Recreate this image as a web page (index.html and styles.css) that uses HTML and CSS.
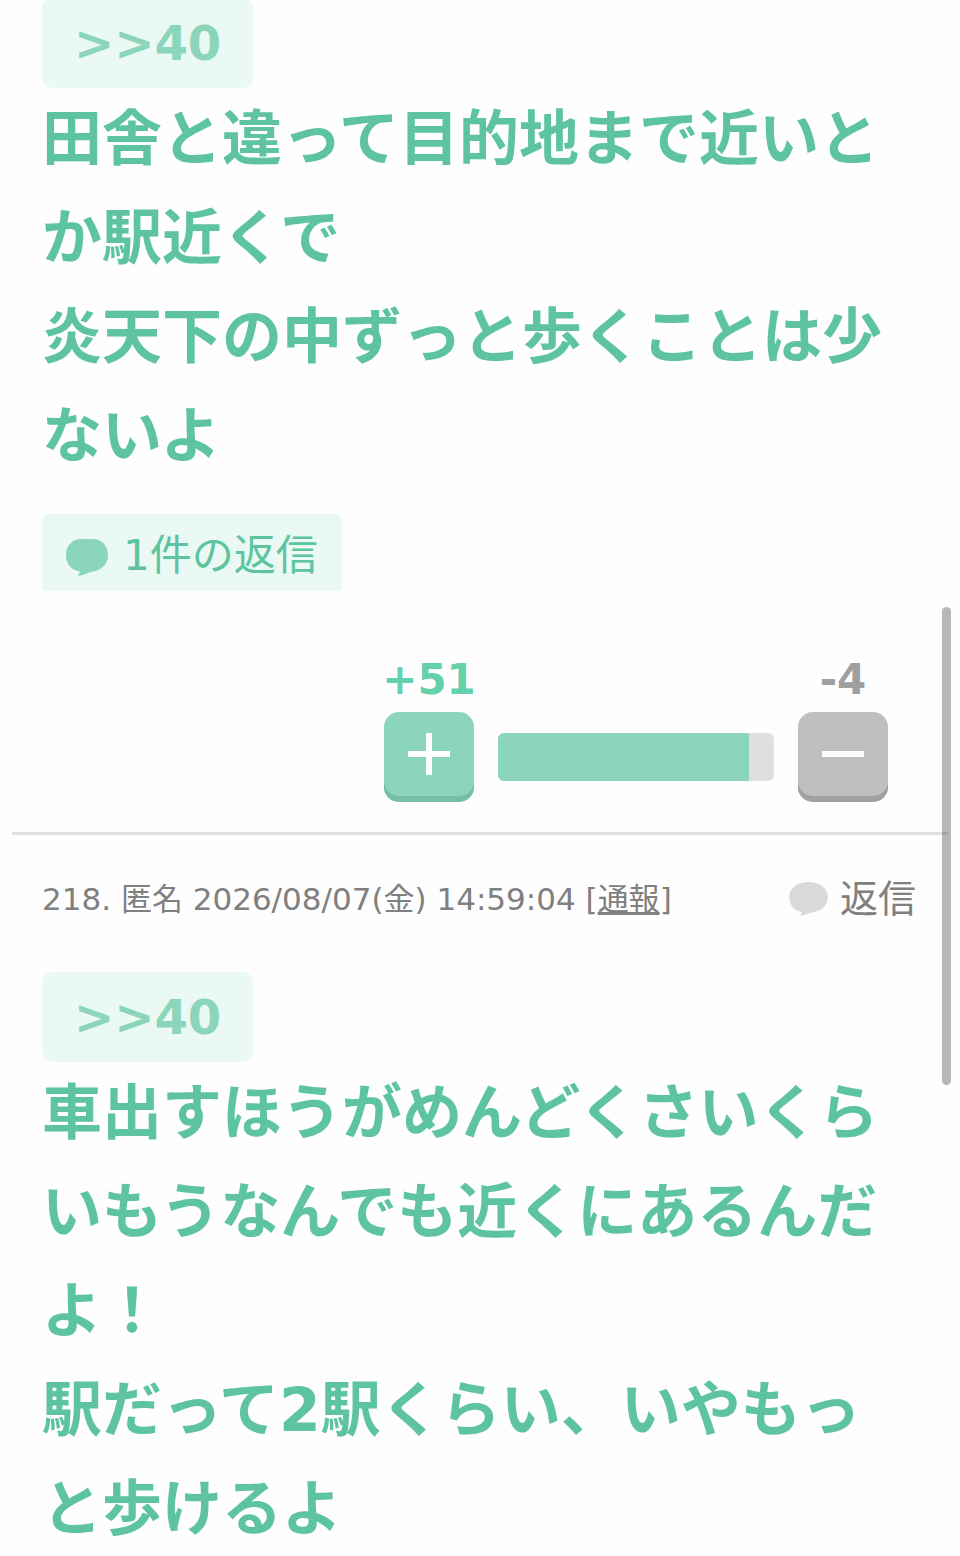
FILE: index.html
```html
<!DOCTYPE html>
<html lang="ja">
<head>
  <meta charset="UTF-8" />
  <meta name="viewport" content="width=device-width, initial-scale=1" />
  <title>トピック</title>
  <link rel="stylesheet" href="styles.css">
</head>
<body>
  <main class="comments">
    <article class="comment">
      <div class="comment-body">
        <a class="anchor" href="#comment40">&gt;&gt;40</a>
        <p class="comment-text">田舎と違って目的地まで近いとか駅近くで<br>炎天下の中ずっと歩くことは少ないよ</p>
        <a class="replies" href="#replies">
          <svg class="bubble" viewBox="0 0 42 37" aria-hidden="true">
            <path d="M15 0H27C36 0 42 7 42 16C42 25 36 31 27 32.500C22 33.500 19 36 12 37L14 32.500C5 31 0 25 0 16C0 7 6 0 15 0Z" />
          </svg>
          <span>1件の返信</span>
        </a>
      </div>
      <div class="votes">
        <div class="vote">
          <span class="count plus">+51</span>
          <button class="vote-btn plus-btn" type="button" aria-label="プラス">
            <svg viewBox="0 0 42 42" aria-hidden="true"><path d="M0 21H42M21 0V42" /></svg>
          </button>
        </div>
        <div class="bar"><div class="bar-fill" style="width: 91%"></div></div>
        <div class="vote">
          <span class="count minus">-4</span>
          <button class="vote-btn minus-btn" type="button" aria-label="マイナス">
            <svg viewBox="0 0 42 42" aria-hidden="true"><path d="M0 21H42" /></svg>
          </button>
        </div>
      </div>
    </article>

    <article class="comment">
      <header class="comment-info">
        <p class="meta">218. 匿名 2026/08/07(金) 14:59:04 [<a href="#report">通報</a>]</p>
        <a class="reply" href="#reply">
          <svg class="bubble" viewBox="0 0 42 37" aria-hidden="true">
            <path d="M21 0C34 0 42 7 42 16C42 25 36 31 27 32.500C22 33.500 19 36 12 37L14 32.500C5 31 0 25 0 16C0 7 8 0 21 0Z" />
          </svg>
          <span>返信</span>
        </a>
      </header>
      <div class="comment-body">
        <a class="anchor" href="#comment40">&gt;&gt;40</a>
        <p class="comment-text">車出すほうがめんどくさいくらいもうなんでも近くにあるんだよ！<br>駅だって2駅くらい、いやもっと歩けるよ</p>
      </div>
    </article>
  </main>
  <div class="scroll-thumb"></div>
</body>
</html>
```
FILE: styles.css
```css
:root {
  --green: #5ec4a0;
  --green-light: #8bd5bb;
  --mint: #eaf9f4;
  --gray: #808080;
}
* {
  box-sizing: border-box;
}
html {
  scrollbar-width: none;
}
body {
  margin: 0;
  overflow-x: hidden;
  background: #fefefe;
  color: var(--gray);
  font-family: Verdana, 'DejaVu Sans', 'Noto Sans CJK JP', sans-serif;
}
p {
  margin: 0;
}
a {
  color: inherit;
  text-decoration: none;
}
.comments {
  margin: -2px 12px 0;
}
.comment + .comment {
  border-top: 3px solid #e0e0e0;
}
.comment-body {
  padding: 0 60px 0 30px;
}
.anchor {
  display: block;
  width: fit-content;
  padding: 0 32px;
  border-radius: 10px;
  background: var(--mint);
  color: var(--green-light);
  font-size: 48px;
  font-weight: 700;
  line-height: 90px;
}
.comment-text {
  padding-top: 2px;
  color: var(--green);
  font-size: 60px;
  font-weight: 700;
  line-height: 99px;
}
.replies {
  display: flex;
  align-items: center;
  gap: 15px;
  width: fit-content;
  margin-top: 28px;
  padding: 6px 24px 0;
  border-radius: 6px 6px 0 0;
  background: var(--mint);
  color: var(--green);
  font-size: 42px;
  line-height: 71px;
}
.bubble {
  flex: none;
  width: 42px;
  height: 37px;
  fill: var(--green-light);
}
.replies .bubble {
  margin-top: 4px;
}
.votes {
  display: flex;
  justify-content: flex-end;
  align-items: flex-end;
  gap: 24px;
  margin-top: 57px;
  padding: 0 60px 30px 30px;
}
.vote {
  display: flex;
  flex-direction: column;
  align-items: center;
  width: 90px;
}
.count {
  font-size: 42px;
  font-weight: 700;
  line-height: 64px;
}
.plus {
  color: #63d1ac;
}
.minus {
  color: #9f9f9f;
}
.vote-btn {
  display: flex;
  justify-content: center;
  align-items: center;
  width: 90px;
  height: 90px;
  padding: 0;
  border: 0;
  border-radius: 15px;
  cursor: pointer;
}
.vote-btn svg {
  width: 42px;
  height: 42px;
  margin-bottom: 6px;
  fill: none;
  stroke: #fff;
  stroke-width: 6;
}
.plus-btn {
  background: var(--green-light);
  box-shadow: inset 0 -6px #74bfa5;
}
.minus-btn {
  background: #bfbfbf;
  box-shadow: inset 0 -6px #a0a0a0;
}
.bar {
  width: 276px;
  height: 48px;
  margin-bottom: 21px;
  border-radius: 6px;
  background: #e0e0e0;
  overflow: hidden;
}
.bar-fill {
  height: 100%;
  background: var(--green-light);
}
.comment-info {
  display: flex;
  justify-content: space-between;
  align-items: center;
  padding: 40px 32px 49px 30px;
}
.meta {
  font-size: 31px;
  line-height: 48px;
}
.meta a {
  text-decoration: underline;
}
.reply {
  display: flex;
  align-items: center;
  gap: 12px;
  font-size: 38px;
  line-height: 48px;
}
.reply .bubble {
  width: 39px;
  height: 34px;
  fill: #d9d9d9;
}
.scroll-thumb {
  position: fixed;
  top: 39%;
  right: 9px;
  width: 9px;
  height: 478px;
  border-radius: 5px;
  background: rgba(0, 0, 0, 0.28);
}
```
